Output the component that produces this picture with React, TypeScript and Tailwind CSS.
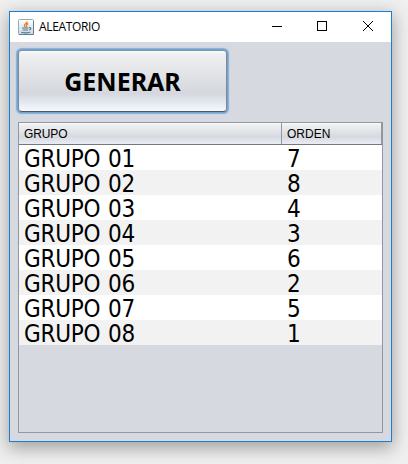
const rows = [
  ["GRUPO 01", 7],
  ["GRUPO 02", 8],
  ["GRUPO 03", 4],
  ["GRUPO 04", 3],
  ["GRUPO 05", 6],
  ["GRUPO 06", 2],
  ["GRUPO 07", 5],
  ["GRUPO 08", 1],
] as const;

function JavaIcon() {
  return (
    <svg className="ml-2 block h-4 w-4 shrink-0" viewBox="0 0 16 16" fill="none">
      <defs>
        <linearGradient id="tile" x1="0" y1="0" x2="0" y2="1">
          <stop offset="0" stopColor="#fff" />
          <stop offset="1" stopColor="#c9d6df" />
        </linearGradient>
      </defs>
      <rect x=".5" y=".5" width="15" height="15" rx="1" fill="url(#tile)" stroke="#92a9b9" />
      <path d="M1 15.500h14.500V2" stroke="#607f95" />
      <path d="M9 2.500C9.200 4.500 5.800 5 6.500 6.800c.2.500.7.900 1 1.400M10.200 4.300C8 5.400 8.600 6 8.800 6.800c.1.500-.4.900-.7 1.200" stroke="#ee7d2b" strokeWidth="1.400" />
      <path d="M4 9h6.500M4.800 11h5.200M3.200 13.200c2.500.8 6.300.8 8.800 0M11 8.700c2.500-.5 2.300 1.800.2 2.300" stroke="#4f7896" strokeWidth="1.100" />
    </svg>
  );
}

function TitleBar() {
  return (
    <div className="flex h-[30px] items-center bg-white">
      <JavaIcon />
      <span className="ml-[5px] font-['Open_Sans',sans-serif] text-[12px] leading-4 tracking-[-0.35px]">ALEATORIO</span>
      <div className="ml-auto flex h-full">
        <svg className="h-[30px] w-[136px]" viewBox="0 0 136 30" fill="none" stroke="#000" shapeRendering="crispEdges">
          <path d="M17 14.500h10M62.500 9.500h9v9h-9z" />
          <path d="M108 9l10 10M118 9l-10 10" shapeRendering="auto" />
        </svg>
      </div>
    </div>
  );
}

export default function App() {
  return (
    <div className="h-[464px] w-[408px] overflow-hidden bg-[#efefef] pt-[11px] pl-[9px] text-black">
      <div className="h-[431px] w-[383px] border border-[#1a7fd0] bg-[#d6d9e0] shadow-[0_5px_16px_1px_rgba(0,0,0,0.33)]">
        <TitleBar />
        <div className="px-[8px] pt-[8px]">
          <button className="flex h-[62px] w-[209px] items-center justify-center rounded-[4px] border border-[#85888e] border-t-[#8293a5] border-b-[#4f565f] bg-[linear-gradient(#fbfbfb,#eeeff0_6%,#e2e4e7_38%,#d4d7dd_70%,#e6eaf2_88%,#f5f8fe)] pb-px font-['Noto_Sans',sans-serif] text-[25px] leading-8 font-bold shadow-[0_0_0_1px_#73a4d1,0_0_1px_1.5px_#7fb0dd]">
            GENERAR
          </button>
          <div className="mt-[10px] h-[311px] w-[365px] border border-[#9297a1]">
            <div className="flex h-[22px] border-b border-[#727781] bg-[linear-gradient(#fbfbfb,#eeeff1_10%,#e2e4e8_40%,#d6d9df_65%,#e9ecf2)] font-['Liberation_Sans',Arial,sans-serif] text-[12px] leading-[22px]">
              <div className="w-[263px] border-r border-[#9297a1] pl-[5px] tracking-[-0.1px]">GRUPO</div>
              <div className="flex-1 border-r border-[#9297a1] pl-[5px]">ORDEN</div>
            </div>
            {rows.map(([name, order]) => (
              <div
                key={name}
                className="flex h-[25px] bg-white pt-[2px] font-['DejaVu_Sans_Condensed','DejaVu_Sans',sans-serif] text-[24px] leading-[23px] tracking-[-0.25px] [word-spacing:1px] [font-stretch:condensed] even:bg-white odd:bg-[#f2f2f2]"
              >
                <div className="mt-px h-[22px] w-[263px] pl-[5px] whitespace-nowrap">{name}</div>
                <div className="mt-px h-[22px] pl-[5px]">{order}</div>
              </div>
            ))}
          </div>
        </div>
      </div>
    </div>
  );
}
